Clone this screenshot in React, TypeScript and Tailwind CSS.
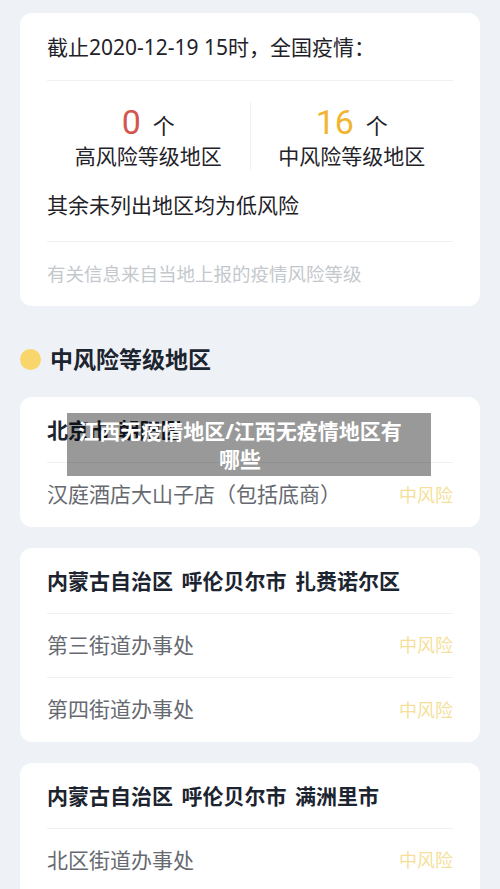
const FONT = "font-['Noto_Sans','Noto_Sans_CJK_SC',sans-serif]";

type Area = {
  title: string;
  places: string[];
};

const AREAS: Area[] = [
  { title: '北京市 朝阳区', places: ['汉庭酒店大山子店（包括底商）'] },
  {
    title: '内蒙古自治区 呼伦贝尔市 扎赉诺尔区',
    places: ['第三街道办事处', '第四街道办事处'],
  },
  { title: '内蒙古自治区 呼伦贝尔市 满洲里市', places: ['北区街道办事处', '南区街道办事处'] },
];

function Stat({ count, color, label }: { count: string; color: string; label: string }) {
  return (
    <div className="flex-1 flex flex-col items-center">
      <div className="flex items-baseline h-[40px] leading-[40px]">
        <span className={`text-[34px] font-['Roboto','Noto_Sans',sans-serif] ${color}`}>{count}</span>
        <span className="ml-[12px] text-[22px] text-[#1f2329]">个</span>
      </div>
      <div className="text-[21px] leading-[28px] text-[#1f2329]">{label}</div>
    </div>
  );
}

function AreaCard({ area }: { area: Area }) {
  return (
    <div className="bg-white rounded-[12px] px-[27px]">
      <div className="pt-[19px] pb-[18px] text-[21px] leading-[28px] font-bold text-[#1c2430] [word-spacing:3px] border-b border-[#eef0f3]">
        {area.title}
      </div>
      {area.places.map((p, i) => (
        <div
          key={p}
          className={`h-[64px] flex items-center justify-between ${
            i < area.places.length - 1 ? 'border-b border-[#eef0f3]' : ''
          }`}
        >
          <span className="text-[21px] text-[#666a70]">{p}</span>
          <span className="text-[18px] text-[#f5df9a]">中风险</span>
        </div>
      ))}
    </div>
  );
}

export default function App() {
  return (
    <div className={`relative min-h-screen bg-[#eef2f6] px-[20px] pt-[13px] pb-[20px] ${FONT}`}>
      {/* Summary card */}
      <div className="bg-white rounded-[12px] px-[27px]">
        <div className="pt-[20px] pb-[19px] text-[21px] leading-[28px] text-[#1f2329] border-b border-[#eef0f3]">
          截止2020-12-19 15时，全国疫情：
        </div>
        <div className="flex mt-[21px] h-[68px]">
          <Stat count="0" color="text-[#d4574e]" label="高风险等级地区" />
          <div className="w-px bg-[#eef0f3]" />
          <Stat count="16" color="text-[#f2b532]" label="中风险等级地区" />
        </div>
        <div className="mt-[21px] pb-[22px] text-[21px] leading-[28px] text-[#1f2329] border-b border-[#eef0f3]">
          其余未列出地区均为低风险
        </div>
        <div className="pt-[19px] pb-[19px] text-[18.5px] leading-[26px] text-[#c4c8cc]">
          有关信息来自当地上报的疫情风险等级
        </div>
      </div>

      {/* Section header */}
      <div className="mt-[37px] mb-[22px] flex items-center h-[32px]">
        <span className="w-[21px] h-[21px] rounded-full bg-[#f9d66b]" />
        <span className="ml-[9px] text-[23px] font-bold text-[#1c2430]">中风险等级地区</span>
      </div>

      <div className="flex flex-col gap-[21px]">
        {AREAS.map((a) => (
          <AreaCard key={a.title} area={a} />
        ))}
      </div>

      {/* Article title overlay */}
      <div className="absolute left-[67px] top-[413px] w-[364px] h-[63px] bg-black/40 pl-[10px] pr-[28px] flex items-center justify-center">
        <p className="text-center text-white font-bold text-[21px] leading-[28px]">
          江西无疫情地区/江西无疫情地区有哪些
        </p>
      </div>
    </div>
  );
}
